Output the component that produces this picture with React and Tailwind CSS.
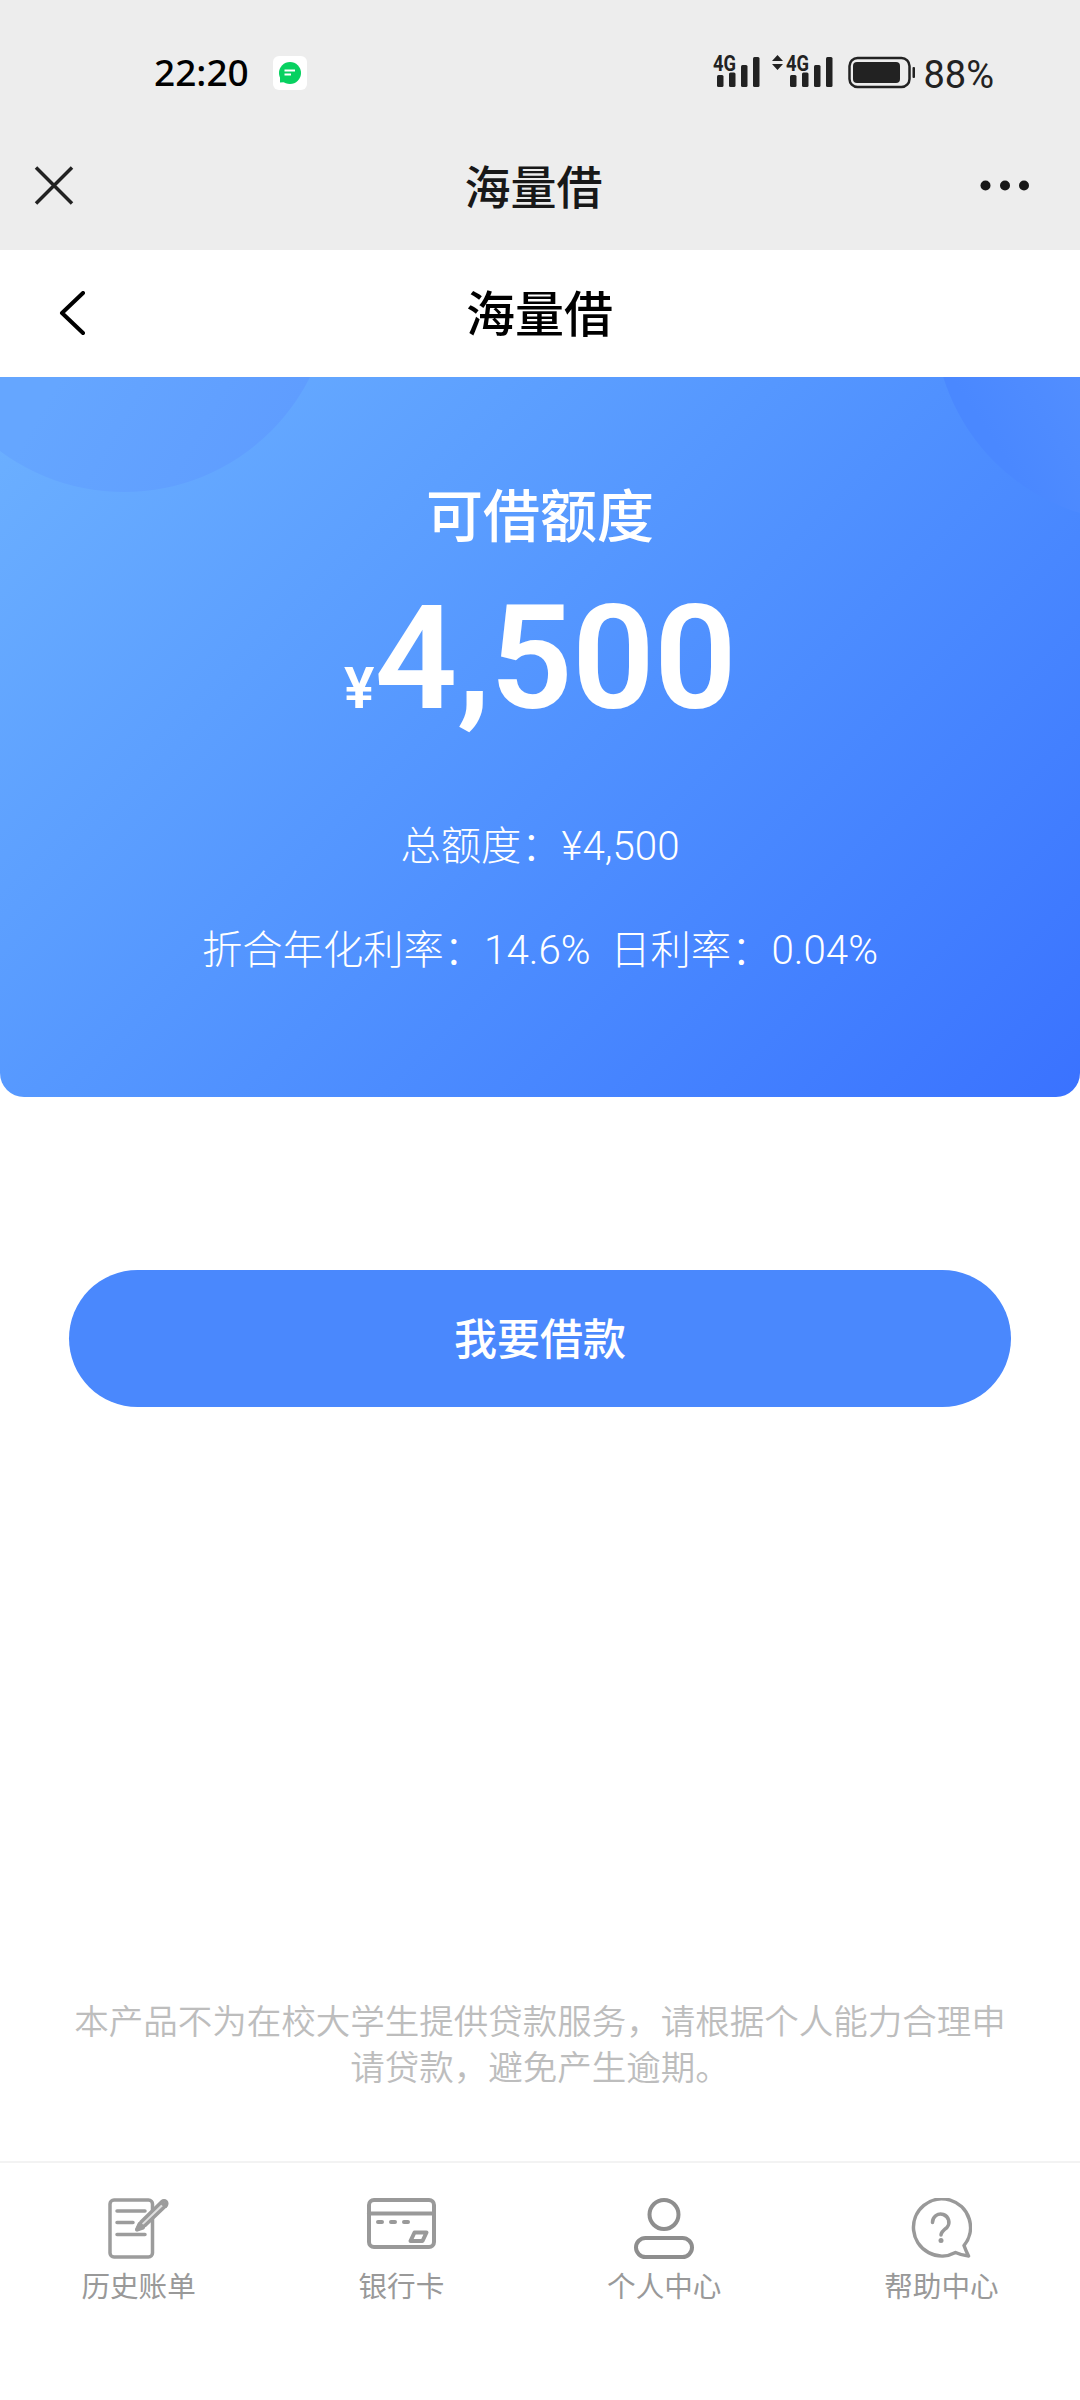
import React from "react";

const cjk = "font-['Roboto','Noto_Sans_CJK_SC',sans-serif]";

const DocIcon = () => (
  <svg width="62" height="62" viewBox="0 0 62 62" fill="none" stroke="#9c9c9c" strokeLinecap="round" strokeLinejoin="round">
    <rect x="2" y="2" width="42.500" height="57" rx="4" strokeWidth="3.500" />
    <path d="M9 13H37M9 24.500H25M9 36.500H37" strokeWidth="3.500" />
    <path d="M29 31.500l4-7.500L54 3.500a2.800 2.800 0 0 1 4 4L37 27.500z" fill="#e0e0e0" strokeWidth="3.500" />
    <path d="M29 31.500l2.500-5.500 3.500 3.500zM54 4.500l3.500 3.500" strokeWidth="4" />
  </svg>
);

const CardIcon = () => (
  <svg width="70" height="62" viewBox="0 0 70 62" fill="none" stroke="#999" strokeLinecap="round" strokeLinejoin="round">
    <rect x="3" y="2" width="65" height="47" rx="5" strokeWidth="4" />
    <path d="M3 15.500H68" strokeWidth="4" />
    <path d="M12 24H16M25 24H29M38 24H42" strokeWidth="4" />
    <path d="M48.500 34.500H60.500L56.500 43H44.500z" strokeWidth="4" />
  </svg>
);

const UserIcon = () => (
  <svg width="62" height="62" viewBox="0 0 62 62" fill="none" stroke="#8e8e8e" strokeWidth="4">
    <circle cx="31" cy="16.500" r="14.500" />
    <rect x="3" y="40" width="56" height="19" rx="9.500" />
  </svg>
);

const HelpIcon = () => (
  <svg width="62" height="62" viewBox="0 0 62 62" fill="none" stroke="#999" strokeWidth="3.500" strokeLinecap="round" strokeLinejoin="round">
    <path d="M45.500 54.500A28.500 28.500 0 1 1 54 47.500Q56 53 58.500 58Q52 57.500 45.500 54.500z" />
    <path d="M22.500 24.500a8.200 8.200 0 1 1 14.500 5Q31 34 31 37" strokeWidth="3.500" />
    <circle cx="31" cy="42.500" r="2.500" fill="#999" stroke="none" />
  </svg>
);

const tabs = [
  { label: "历史账单", icon: <DocIcon /> },
  { label: "银行卡", icon: <CardIcon /> },
  { label: "个人中心", icon: <UserIcon /> },
  { label: "帮助中心", icon: <HelpIcon /> },
];

const Signal = () => (
  <svg className="overflow-visible" width="48" height="36" viewBox="0 0 48 36" fill="#222">
    <text x="0" y="15.500" fontSize="22" fontWeight="700" fontFamily="Roboto, sans-serif" textLength="23" lengthAdjust="spacingAndGlyphs">4G</text>
    <rect x="4" y="20" width="6.500" height="12" rx="1.500" />
    <rect x="16" y="17.500" width="6.500" height="14.500" rx="1.500" />
    <rect x="28" y="10" width="6.500" height="22" rx="1.500" />
    <rect x="40" y="2" width="6.500" height="30" rx="1.500" />
  </svg>
);

const StatusBar = () => (
  <div className="h-[124px] pl-[154px] pr-[86px] pt-[22px] flex items-center text-[#222]">
    <span className="pb-[3px] font-['Noto_Sans',sans-serif] font-medium text-[37px] leading-none text-black">22:20</span>
    <div className="ml-[24px] w-[34px] h-[34px] rounded-md bg-white flex items-center justify-center">
      <svg width="24" height="24" viewBox="0 0 24 24">
        <circle cx="12" cy="12" r="11" fill="#07d160" />
        <path d="M2 14V21.500L9 21z" fill="#07d160" />
        <path d="M6.500 9.500H17M6.500 13.500H13" stroke="#fff" strokeWidth="2" />
      </svg>
    </div>
    <div className="ml-auto flex items-center">
      <Signal />
      <svg className="ml-[11px]" width="11" height="36" viewBox="0 0 11 36" fill="#222">
        <path d="M5.500 0L11 6H0zM5.500 15L0 9H11z" />
      </svg>
      <span className="ml-[3px] flex"><Signal /></span>
      <svg className="ml-[14px]" width="68" height="36" viewBox="0 0 68 36">
        <rect x="1.500" y="3" width="60" height="29" rx="8" fill="none" stroke="#222" strokeWidth="2.500" />
        <rect x="5" y="7" width="47" height="21" rx="4" fill="#222" />
        <rect x="64.500" y="12" width="2.500" height="11" rx="1" fill="#222" />
      </svg>
      <span className="ml-[7px] pt-[3px] font-['Roboto',sans-serif] text-[38px] leading-none">88%</span>
    </div>
  </div>
);

const App = () => {
  return (
    <div className={`w-[1080px] h-[2400px] bg-white flex flex-col overflow-hidden ${cjk}`}>
      {/* Status bar + webview title */}
      <header className="h-[250px] bg-[#ededed]">
        <StatusBar />
        <div className="h-[124px] pl-[34px] pr-[50px] flex items-center justify-between text-[#181818]">
          <svg width="40" height="40" viewBox="0 0 40 40" stroke="#222" strokeWidth="3.500">
            <path d="M2 1.500L38 37.500M38 1.500L2 37.500" />
          </svg>
          <h1 className="pt-1 pl-[13px] text-[46px] leading-none font-medium">海量借</h1>
          <svg width="50" height="12" viewBox="0 0 50 12" fill="#181818">
            <circle cx="5.500" cy="5.500" r="5" />
            <circle cx="25" cy="5.500" r="5" />
            <circle cx="44" cy="5.500" r="5" />
          </svg>
        </div>
      </header>

      {/* Page nav */}
      <nav className="h-[127px] px-[58px] flex items-center text-black">
        <svg width="28" height="46" viewBox="0 0 28 46" fill="none" stroke="#000" strokeWidth="4" strokeLinecap="round" strokeLinejoin="round">
          <path d="M25 2L4 22L25 42" />
        </svg>
        <h2 className="flex-1 pr-[29px] pt-[3px] text-center text-[49px] leading-none font-medium">海量借</h2>
      </nav>

      {/* Credit card */}
      <section className="relative h-[720px] rounded-b-[24px] overflow-hidden bg-linear-135 from-[#6db1ff] to-[#3a72ff] text-white text-center flex flex-col items-center">
        <svg className="absolute inset-0" width="1080" height="720" viewBox="0 0 1080 720">
          <defs>
            <linearGradient id="leftFill" gradientUnits="userSpaceOnUse" x1="60" y1="0" x2="250" y2="110">
              <stop offset="0" stopColor="#65a6ff" />
              <stop offset="1" stopColor="#5f9dff" />
            </linearGradient>
            <linearGradient id="rightFill" gradientUnits="userSpaceOnUse" x1="990" y1="60" x2="1080" y2="0">
              <stop offset="0" stopColor="#4a88ff" />
              <stop offset="1" stopColor="#528eff" />
            </linearGradient>
          </defs>
          <circle cx="124" cy="-93" r="208" fill="url(#leftFill)" />
          <circle cx="1140" cy="-61" r="206" fill="url(#rightFill)" />
        </svg>
        <p className="relative mt-[112px] text-[57px] leading-[57px] font-medium">可借额度</p>
        <p className="relative mt-[27px] text-[145px] leading-[170px] font-semibold tracking-[-0.8px]">
          <span className="text-[57px] mr-px">¥</span>4,500
        </p>
        <p className="relative mt-[44px] text-[40.3px] leading-[58px] font-light">总额度：¥4,500</p>
        <p className="relative mt-[46px] text-[40.3px] leading-[58px] font-light whitespace-pre">折合年化利率：14.6%  日利率：0.04%</p>
      </section>

      <button className="mt-[173px] mx-[69px] h-[137px] shrink-0 rounded-full bg-[#4a88fd] pt-[3px] text-white text-[43px] font-medium">
        我要借款
      </button>

      <p className="mt-auto mb-[70px] px-[72px] text-center text-[34.5px] leading-[45.5px] font-[350] text-[#bdbdbd]">
        本产品不为在校大学生提供贷款服务，请根据个人能力合理申请贷款，避免产生逾期。
      </p>

      {/* Bottom tabs */}
      <footer className="h-[239px] border-t-2 border-[#f3f3f3] pt-[35px] flex justify-around items-start">
        {tabs.map((tab) => (
          <div key={tab.label} className="flex flex-col items-center">
            {tab.icon}
            <span className="mt-[11px] text-[28.6px] leading-[32px] text-[#999]">{tab.label}</span>
          </div>
        ))}
      </footer>
    </div>
  );
};

export default App;
